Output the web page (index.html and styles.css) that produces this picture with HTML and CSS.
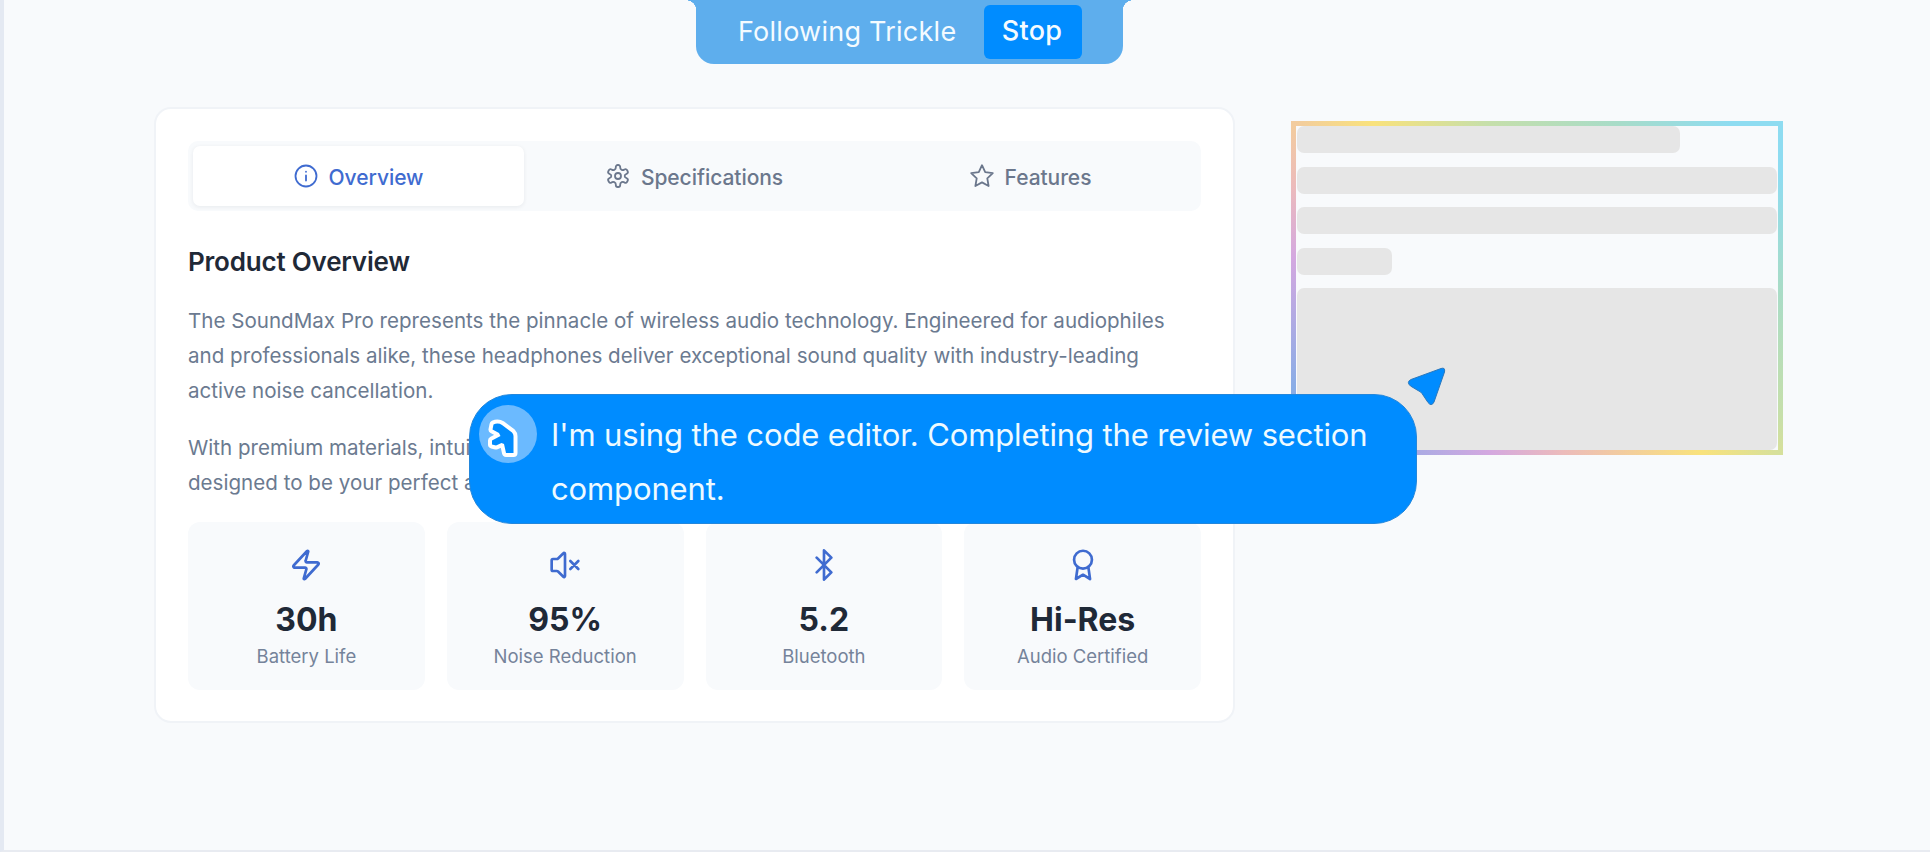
FILE: index.html
```html
<!DOCTYPE html>
<html lang="en">
<head>
    <meta charset="UTF-8">
    <meta name="viewport" content="width=device-width, initial-scale=1.0">
    <title>SoundMax Pro</title>
    <link rel="stylesheet" href="styles.css">
</head>
<body>
    <div class="page">
        <main class="card">
            <div class="tabs">
                <button class="tab active">
                    <svg class="tab-icon" viewBox="0 0 24 24"><circle cx="12" cy="12" r="10.5"/><path d="M12 16.5v-5M12 7.7v.1"/></svg>
                    <span>Overview</span>
                </button>
                <button class="tab">
                    <svg class="tab-icon" viewBox="0 0 24 24"><path d="M12.22 1h-.44a2 2 0 0 0-2 2v.8a2 2 0 0 1-1 1.700l-.6.350a2 2 0 0 1-2 0l-.6-.35a2 2 0 0 0-2.730.73l-.4.700a2 2 0 0 0 .73 2.730l.6.400a2 2 0 0 1 0 3.880l-.6.400a2 2 0 0 0-.73 2.730l.4.700a2 2 0 0 0 2.730.73l.6-.35a2 2 0 0 1 2 0l.6.350a2 2 0 0 1 1 1.700V21a2 2 0 0 0 2 2h.44a2 2 0 0 0 2-2v-.8a2 2 0 0 1 1-1.700l.6-.35a2 2 0 0 1 2 0l.6.350a2 2 0 0 0 2.730-.73l.4-.7a2 2 0 0 0-.73-2.730l-.6-.4a2 2 0 0 1 0-3.880l.6-.4a2 2 0 0 0 .73-2.730l-.4-.7a2 2 0 0 0-2.730-.73l-.6.350a2 2 0 0 1-2 0l-.6-.35a2 2 0 0 1-1-1.700V3a2 2 0 0 0-2-2z"/><circle cx="12" cy="12" r="3"/></svg>
                    <span>Specifications</span>
                </button>
                <button class="tab">
                    <svg class="tab-icon" viewBox="0 0 24 24"><path d="M12 1.200l3.200 6.900 7.600 1-5.500 5.200 1.300 7.700-6.600-3.600L5.400 22l1.300-7.700L1.200 9.100l7.600-1z"/></svg>
                    <span>Features</span>
                </button>
            </div>
            <h2>Product Overview</h2>
            <p>The SoundMax Pro represents the pinnacle of wireless audio technology. Engineered for audiophiles<br>and professionals alike, these headphones deliver exceptional sound quality with industry-leading<br>active noise cancellation.</p>
            <p>With premium materials, intuitive controls, and all-day comfort, the SoundMax Pro is<br>designed to be your perfect audio companion.</p>
            <div class="stats">
                <div class="stat">
                    <svg class="stat-icon" viewBox="0 0 24 24"><path d="M3.500 14a1 1 0 0 1-.78-1.630L12.800 1.500a.5.5 0 0 1 .86.46l-1.900 6.700A1 1 0 0 0 12.800 10h7.700a1 1 0 0 1 .78 1.630L11.200 22.500a.5.5 0 0 1-.86-.46l1.900-6.700A1 1 0 0 0 11.200 14z"/></svg>
                    <div class="value">30h</div>
                    <div class="label">Battery Life</div>
                </div>
                <div class="stat">
                    <svg class="stat-icon" viewBox="0 0 24 24"><path d="M12 3.700a.7.7 0 0 0-1.200-.5L6.800 7.100a1.400 1.400 0 0 1-1 .4H3a1 1 0 0 0-1 1v7a1 1 0 0 0 1 1h2.800a1.400 1.400 0 0 1 1 .4l4 3.900a.7.7 0 0 0 1.200-.5zM22 9l-6 6M16 9l6 6"/></svg>
                    <div class="value">95%</div>
                    <div class="label">Noise Reduction</div>
                </div>
                <div class="stat">
                    <svg class="stat-icon" viewBox="0 0 24 24"><path d="M6.500 6.500l11 11L12 23V1l5.500 5.500-11 11"/></svg>
                    <div class="value">5.2</div>
                    <div class="label">Bluetooth</div>
                </div>
                <div class="stat">
                    <svg class="stat-icon" viewBox="0 0 24 24"><circle cx="12" cy="8" r="6.700"/><path d="M8 13.500L6.700 22.500l5.300-3.200 5.300 3.200-1.300-9"/></svg>
                    <div class="value">Hi-Res</div>
                    <div class="label">Audio Certified</div>
                </div>
            </div>
        </main>
        <aside class="skeleton">
            <div class="bar bar-title"></div>
            <div class="bar"></div>
            <div class="bar"></div>
            <div class="bar bar-short"></div>
            <div class="bar bar-block"></div>
        </aside>
    </div>

    <div class="banner">
        <span>Following Trickle</span>
        <button class="stop-btn">Stop</button>
    </div>

    <svg class="cursor" viewBox="0 0 40 40"><path d="M4 14.500L34 3.500Q38.500 2 37.500 7L27 37Q24.500 42 21 37.500L15 28.500Q13.500 26.500 11 25.500L3.500 21Q-1 17 4 14.500z"/></svg>

    <div class="bubble">
        <svg class="avatar" viewBox="0 0 58 58">
            <circle class="avatar-bg" cx="29" cy="29" r="29"/>
            <path class="avatar-mark" d="M14.500 19.500Q19 17.500 23 20L33 27.500Q34.500 29 34.500 31V48H27L25 39L22.500 38L17 40.500L13 39.500L13 35.500L21.500 31L20 28L13.500 24.500z"/>
        </svg>
        <div class="message">I'm using the code editor. Completing the review section component.</div>
    </div>
</body>
</html>
```
FILE: styles.css
```css
* {
    box-sizing: border-box;
}
body {
    margin: 0;
    height: 852px;
    overflow: hidden;
    position: relative;
    font-family: Inter, sans-serif;
    background: #f8fafc;
    border-left: 4px solid #e4e9f2;
    border-bottom: 2px solid #e8ebf1;
}
button {
    font-family: inherit;
    border: none;
    cursor: pointer;
}
.page {
    display: flex;
    align-items: flex-start;
    gap: 56px;
    padding: 107px 0 0 150px;
}
.card {
    width: 1081px;
    height: 616px;
    padding: 32px 32px 0;
    background: white;
    border: 2px solid #f0f3f7;
    border-radius: 17px;
}
.tabs {
    display: grid;
    grid-template-columns: repeat(3, 1fr);
    gap: 5px;
    height: 70px;
    padding: 5px;
    background: #f8fafc;
    border-radius: 10px;
}
.tab {
    display: flex;
    align-items: center;
    justify-content: center;
    gap: 11px;
    padding: 2px 0 0;
    font-size: 21px;
    font-weight: 500;
    letter-spacing: -0.05px;
    color: #6b778c;
    background: none;
    border-radius: 7px;
}
.tab.active {
    color: #3f6bd0;
    background: white;
    box-shadow: 0 1px 4px rgba(15, 23, 42, 0.07);
}
.tab-icon {
    width: 24px;
    height: 24px;
    margin-top: -3px;
    fill: none;
    stroke: currentColor;
    stroke-width: 1.8;
    stroke-linecap: round;
    stroke-linejoin: round;
}
h2 {
    margin: 34px 0 25px;
    font-size: 26px;
    font-weight: 600;
    line-height: 34px;
    letter-spacing: -0.2px;
    color: #1f2937;
}
p {
    margin: 0 0 23px;
    font-size: 20.55px;
    line-height: 34.8px;
    letter-spacing: 0.02px;
    color: #6b7a90;
    white-space: nowrap;
}
.stats {
    display: grid;
    grid-template-columns: repeat(4, 1fr);
    gap: 22px;
    margin-top: -2px;
}
.stat {
    height: 168px;
    padding-top: 27px;
    text-align: center;
    background: #f8fafc;
    border-radius: 12px;
}
.stat-icon {
    display: block;
    width: 32px;
    height: 32px;
    margin: 0 auto 17px;
    fill: none;
    stroke: #3f6bd0;
    stroke-width: 2;
    stroke-linecap: round;
    stroke-linejoin: round;
}
.value {
    font-size: 32px;
    font-weight: 700;
    line-height: 44px;
    color: #1f2937;
}
.label {
    font-size: 18.5px;
    line-height: 28px;
    color: #75839a;
}

/* loading placeholder */
.skeleton {
    display: flex;
    flex-direction: column;
    gap: 13.5px;
    width: 492px;
    height: 334px;
    margin-top: 14px;
    padding: 0 1px;
    border: 5px solid;
    border-image: linear-gradient(45deg, #8aade6 8%, #d4a8e0 24%, #ecbbbb 33%, #f2cba0 40%, #f9e27c 50%, #c6dfaa 64%, #a8dcc8 80%, #8edcf1 94%) 1;
}
.bar {
    height: 27px;
    background: #e6e6e6;
    border-radius: 7px;
}
.bar-title {
    width: 383px;
}
.bar-short {
    width: 95px;
}
.bar-block {
    flex: 1;
}

.banner {
    position: absolute;
    top: 0;
    left: 692px;
    display: flex;
    align-items: center;
    justify-content: space-between;
    width: 427px;
    height: 64px;
    padding: 0 41px 1px 42px;
    font-size: 27px;
    letter-spacing: 0.25px;
    white-space: nowrap;
    color: #f4fbff;
    background: #5eaeed;
    border-radius: 0 0 18px 18px;
}
.banner::before,
.banner::after {
    content: "";
    position: absolute;
    top: 0;
    width: 11px;
    height: 9px;
}
.banner::before {
    left: -11px;
    background: radial-gradient(ellipse 11px 9px at 0 100%, transparent 98%, #5eaeed);
}
.banner::after {
    right: -11px;
    background: radial-gradient(ellipse 11px 9px at 100% 100%, transparent 98%, #5eaeed);
}
.stop-btn {
    width: 98px;
    height: 54px;
    padding: 0 2px 2px 0;
    font-size: 27px;
    font-weight: 500;
    letter-spacing: 0.3px;
    color: #f4fbff;
    background: #008cff;
    border-radius: 6px;
}
.cursor {
    position: absolute;
    top: 365px;
    left: 1403px;
    width: 40px;
    height: 40px;
    fill: #008cff;
    stroke: #2a78bd;
    stroke-width: 1;
}
.bubble {
    position: absolute;
    top: 394px;
    left: 465px;
    display: flex;
    gap: 14px;
    width: 948px;
    height: 130px;
    padding: 10px 40px 0 9px;
    background: #008cff;
    border: 1px solid #2387dc;
    border-radius: 43px;
}
.avatar {
    flex-shrink: 0;
    width: 58px;
    height: 58px;
}
.avatar-bg {
    fill: #6bbaff;
}
.avatar-mark {
    fill: #008cff;
    stroke: white;
    stroke-width: 8;
    stroke-linejoin: round;
    paint-order: stroke;
}
.message {
    margin-top: 3px;
    font-size: 31px;
    line-height: 54px;
    letter-spacing: -0.12px;
    color: #eefaff;
}
```
